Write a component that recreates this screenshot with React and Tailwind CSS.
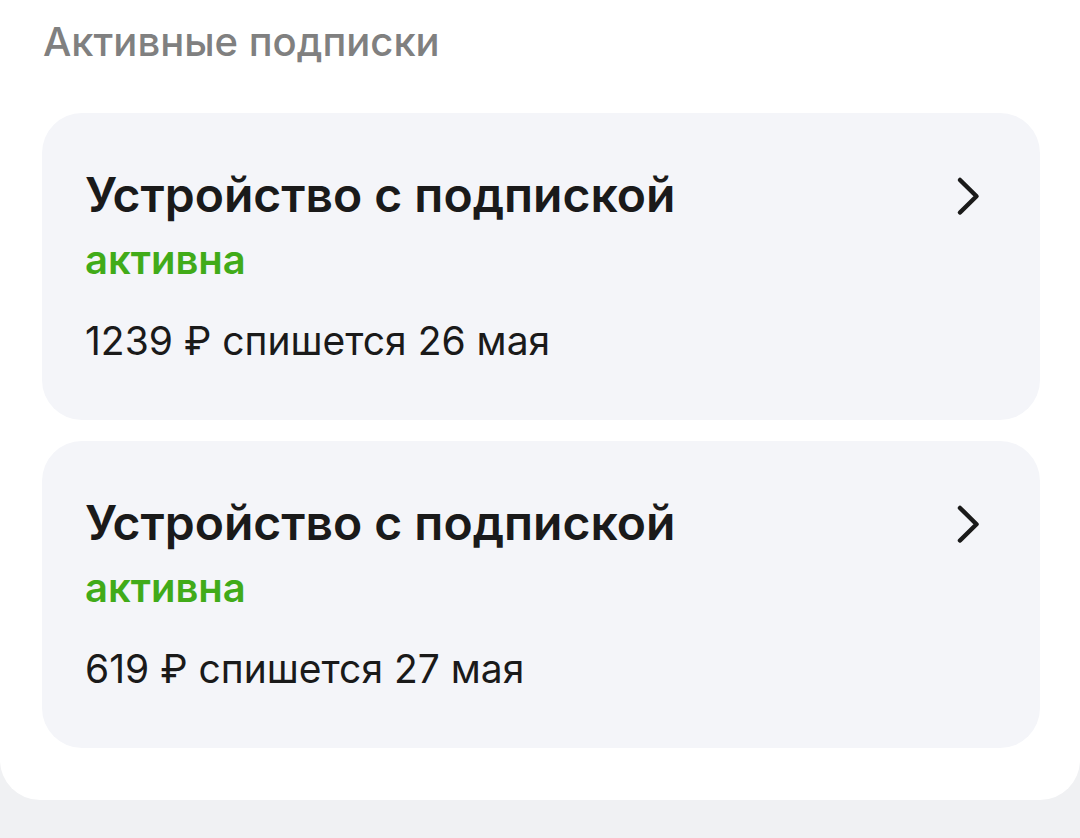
import React from 'react'

const subs = [
  { price: '1239 ₽ спишется 26 мая' },
  { price: '619 ₽ спишется 27 мая' },
]

const Chevron = () => (
  <svg width="30" height="44" viewBox="0 0 30 44" fill="none">
    <path d="M6 6 L22.5 22.25 L6 38.5" stroke="#1a1a1a" strokeWidth="4.5" strokeLinecap="round" strokeLinejoin="round" />
  </svg>
)

const SubCard = ({ price }) => {
  return (
    <div className="flex justify-between bg-[#f4f5f9] rounded-[40px] pl-[43px] pr-[56px] pt-[54px] h-[307px]">
      <div className="flex flex-col">
        <div className="text-[48px] leading-[56px] font-semibold text-[#1a1a1a]">
          Устройство с подпиской
        </div>
        <div className="text-[40px] leading-[48px] font-semibold text-[#41ab19] mt-[13px]">
          активна
        </div>
        <div className="text-[39px] leading-[48px] text-[#1a1a1a] mt-[33px]">
          {price}
        </div>
      </div>
      <div className="pt-[7px]">
        <Chevron />
      </div>
    </div>
  )
}

export default function App() {
  return (
    <div className="min-h-[838px] bg-[#f0f1f3]" style={{ fontFamily: 'Inter, "Noto Sans", sans-serif' }}>
      <div className="bg-white rounded-b-[40px] px-[42px] pt-[18px] pb-[52px]">
        <h2 className="text-[40px] leading-[48px] font-medium text-[#808080] pl-[1px]">
          Активные подписки
        </h2>
        <div className="flex flex-col gap-[21px] mt-[47px] mr-[-2px]">
          {subs.map((s, i) => (
            <SubCard key={i} price={s.price} />
          ))}
        </div>
      </div>
    </div>
  )
}
